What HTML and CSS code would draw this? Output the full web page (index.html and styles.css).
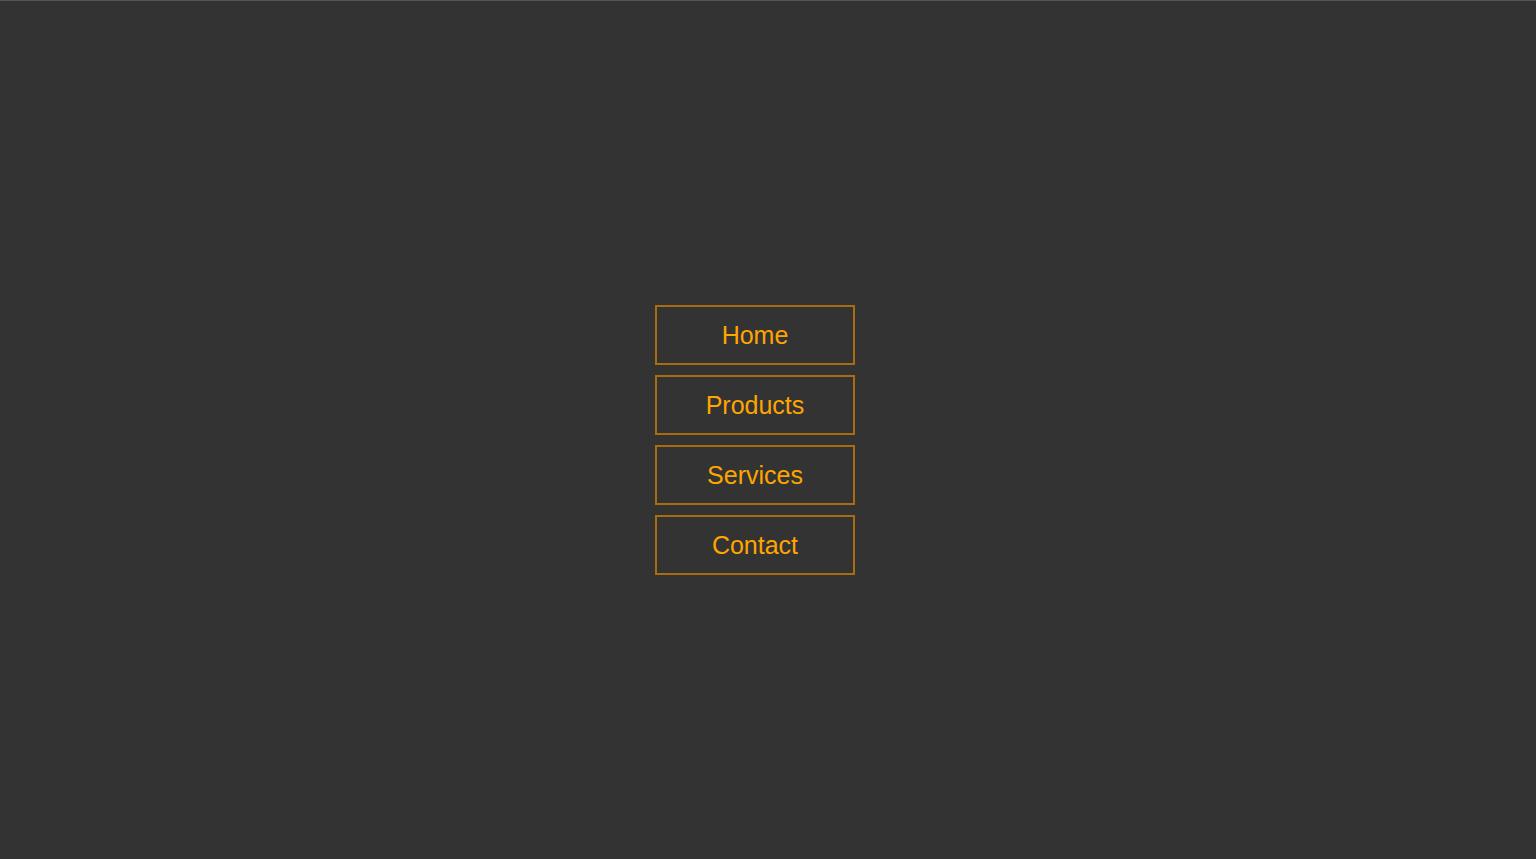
FILE: index.html
```html
<!DOCTYPE html>
<html lang="en">
<head>
<meta charset="utf-8">
<title>Menu</title>
<link rel="stylesheet" href="styles.css">
</head>
<body>
<div class="page">
  <nav class="menu">
    <a class="menu-item" href="#">Home</a>
    <a class="menu-item" href="#">Products</a>
    <a class="menu-item" href="#">Services</a>
    <a class="menu-item" href="#">Contact</a>
  </nav>
</div>
</body>
</html>
```
FILE: styles.css
```css
html, body {
  margin: 0;
  padding: 0;
  background: #333333;
}
.page {
  box-sizing: border-box;
  height: 859px;
  border-top: 1px solid #555555;
  padding: 20px 26px 0 0;
  display: flex;
  align-items: center;
  justify-content: center;
}
.menu {
  display: flex;
  flex-direction: column;
  gap: 10px;
}
.menu-item {
  box-sizing: border-box;
  width: 200px;
  height: 60px;
  border: 2px solid #a86e0e;
  display: flex;
  align-items: center;
  justify-content: center;
  padding-top: 1px;
  color: #ffa500;
  font-family: "Liberation Sans", Arial, sans-serif;
  font-size: 25px;
  text-decoration: none;
}
```
